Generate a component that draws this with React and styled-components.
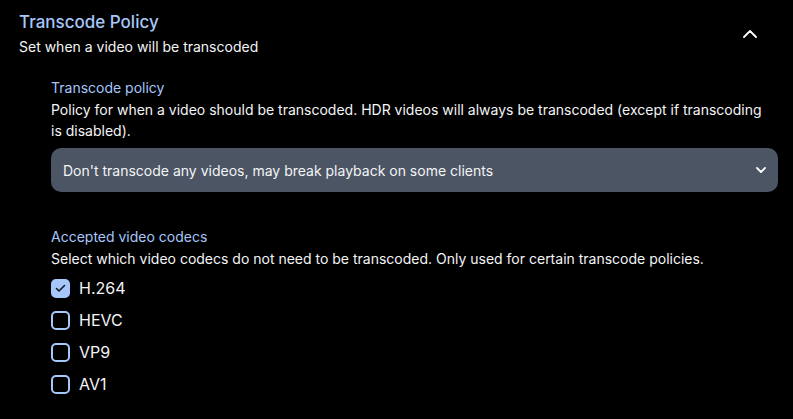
import React, { useState } from 'react'
import styled, { createGlobalStyle } from 'styled-components'

const Global = createGlobalStyle`
  body {
    margin: 0;
    background: #000;
    font-family: Inter, "Noto Sans", sans-serif;
    color: #f3f4f6;
  }
`

const Section = styled.section`
  padding: 10px 14px 0 19px;
`

const Header = styled.div`
  display: flex;
  align-items: flex-start;
  justify-content: space-between;
`

const Title = styled.h2`
  margin: 0;
  font-size: 17px;
  font-weight: 500;
  line-height: 24px;
  color: #a7c7fb;
`

const Subtitle = styled.p`
  margin: 2px 0 0;
  font-size: 14px;
  line-height: 22px;
`

const Toggle = styled.button`
  background: none;
  border: 0;
  padding: 0;
  margin-right: 22px;
  margin-top: 20px;
  color: #fff;
  display: flex;
`

const Body = styled.div`
  padding: 19px 0 0 32px;
  display: flex;
  flex-direction: column;
  gap: 34px;
`

const Field = styled.div`
  display: flex;
  flex-direction: column;
`

const Label = styled.div`
  font-size: 14px;
  line-height: 22px;
  color: #a7c7fb;
`

const Help = styled.div`
  font-size: 14px;
  line-height: 21px;
  max-width: 718px;
`

const SelectBox = styled.div`
  margin-top: 7px;
  height: 44px;
  border-radius: 10px;
  background: #4b5563;
  display: flex;
  align-items: center;
  justify-content: space-between;
  padding: 0 12px;
  font-size: 14px;
  margin-right: 1px;
`

const Options = styled.div`
  display: flex;
  flex-direction: column;
  gap: 13px;
  margin-top: 10px;
`

const Option = styled.label`
  display: flex;
  align-items: center;
  gap: 9px;
  font-size: 16px;
  line-height: 19px;
`

const Box = styled.span`
  width: 19px;
  height: 19px;
  box-sizing: border-box;
  border-radius: 5px;
  border: 2px solid #a7c7fb;
  background: ${p => (p.$on ? '#a7c7fb' : 'transparent')};
  display: flex;
  align-items: center;
  justify-content: center;
`

const Chevron = ({ up }) => (
  <svg width="14" height="8" viewBox="0 0 14 8" fill="none" stroke="currentColor" strokeWidth="1.8" strokeLinecap="round" strokeLinejoin="round">
    {up ? <path d="M1 7 7 1l6 6" /> : <path d="M1 1l6 6 6-6" />}
  </svg>
)

const codecs = ['H.264', 'HEVC', 'VP9', 'AV1']

export default function App() {
  const [on, setOn] = useState(['H.264'])
  return (
    <>
      <Global />
      <Section>
        <Header>
          <div>
            <Title>Transcode Policy</Title>
            <Subtitle>Set when a video will be transcoded</Subtitle>
          </div>
          <Toggle><Chevron up /></Toggle>
        </Header>
        <Body>
          <Field>
            <Label>Transcode policy</Label>
            <Help>Policy for when a video should be transcoded. HDR videos will always be transcoded (except if transcoding is disabled).</Help>
            <SelectBox>
              <span>Don't transcode any videos, may break playback on some clients</span>
              <svg width="10" height="6" viewBox="0 0 10 6" fill="none" stroke="#fff" strokeWidth="1.8" strokeLinecap="round" strokeLinejoin="round"><path d="M1 1l4 4 4-4" /></svg>
            </SelectBox>
          </Field>
          <Field>
            <Label>Accepted video codecs</Label>
            <Help>Select which video codecs do not need to be transcoded. Only used for certain transcode policies.</Help>
            <Options>
              {codecs.map(c => {
                const checked = on.includes(c)
                return (
                  <Option key={c} onClick={() => setOn(checked ? on.filter(x => x !== c) : [...on, c])}>
                    <Box $on={checked}>
                      {checked && (
                        <svg width="11" height="9" viewBox="0 0 11 9" fill="none" stroke="#111827" strokeWidth="1.6" strokeLinecap="round" strokeLinejoin="round"><path d="M1.5 4.5 4 7l5.5-5.5" /></svg>
                      )}
                    </Box>
                    {c}
                  </Option>
                )
              })}
            </Options>
          </Field>
        </Body>
      </Section>
    </>
  )
}
